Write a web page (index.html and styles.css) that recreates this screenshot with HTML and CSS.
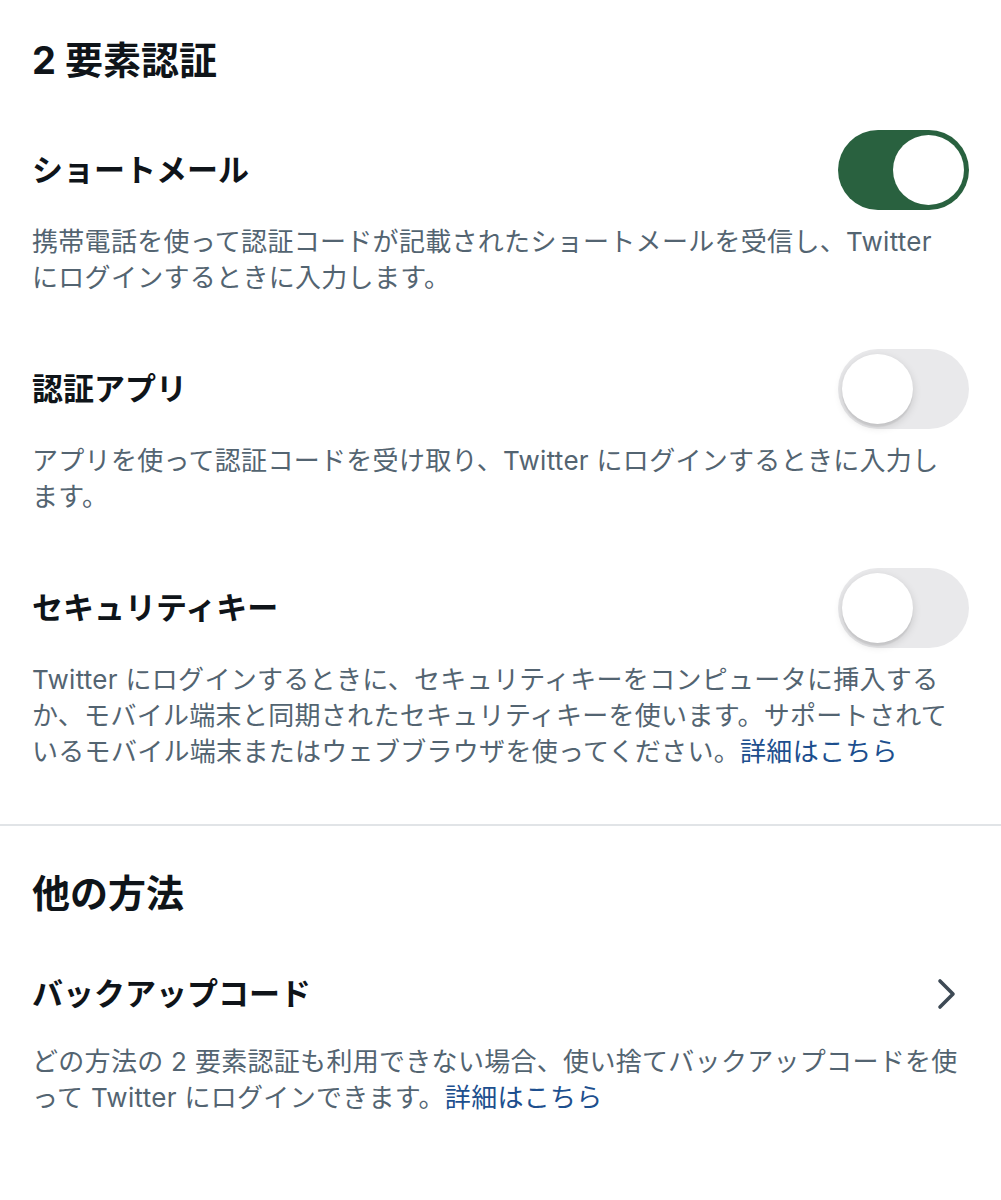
FILE: index.html
```html
<!DOCTYPE html>
<html lang="ja">
<head>
<meta charset="utf-8">
<title>2要素認証</title>
<link rel="stylesheet" href="styles.css">
</head>
<body>
<main class="page">
  <section class="group">
    <h1 class="group-title">2 要素認証</h1>

    <div class="item">
      <div class="item-row">
        <span class="item-label">ショートメール</span>
        <span class="switch switch-on" role="switch" aria-checked="true"><span class="knob"></span></span>
      </div>
      <p class="item-desc">携帯電話を使って認証コードが記載されたショートメールを受信し、Twitter にログインするときに入力します。</p>
    </div>

    <div class="item">
      <div class="item-row">
        <span class="item-label">認証アプリ</span>
        <span class="switch" role="switch" aria-checked="false"><span class="knob"></span></span>
      </div>
      <p class="item-desc">アプリを使って認証コードを受け取り、Twitter にログインするときに入力します。</p>
    </div>

    <div class="item">
      <div class="item-row">
        <span class="item-label">セキュリティキー</span>
        <span class="switch" role="switch" aria-checked="false"><span class="knob"></span></span>
      </div>
      <p class="item-desc">Twitter にログインするときに、セキュリティキーをコンピュータに挿入するか、モバイル端末と同期されたセキュリティキーを使います。サポートされているモバイル端末またはウェブブラウザを使ってください。<a class="link" href="#">詳細はこちら</a></p>
    </div>
  </section>

  <hr class="divider">

  <section class="group">
    <h2 class="group-title group-title-alt">他の方法</h2>

    <div class="item item-nav">
      <div class="item-row">
        <span class="item-label">バックアップコード</span>
        <svg class="chevron" viewBox="0 0 24 32" width="24" height="32" aria-hidden="true">
          <path d="M5 3 L18 16 L5 29" fill="none" stroke="currentColor" stroke-width="3.6" stroke-linecap="round" stroke-linejoin="round"/>
        </svg>
      </div>
      <p class="item-desc">どの方法の 2 要素認証も利用できない場合、使い捨てバックアップコードを使って Twitter にログインできます。<a class="link" href="#">詳細はこちら</a></p>
    </div>
  </section>
</main>
</body>
</html>
```

FILE: styles.css
```css
* {
  box-sizing: border-box;
}

html, body {
  margin: 0;
  padding: 0;
  background: #ffffff;
}

body {
  font-family: "Inter", "Noto Sans CJK JP", sans-serif;
  color: #0f1419;
  -webkit-font-smoothing: antialiased;
}

.page {
  width: 1001px;
}

.group {
  padding: 35px 32px 0;
  display: flex;
  flex-direction: column;
}

.group-title {
  margin: 0;
  font-size: 38px;
  line-height: 50px;
  font-weight: 700;
}

.group-title-alt {
  font-size: 38px;
  margin-top: 7px;
}

.item {
  margin-top: 53px;
}

.group-title + .item {
  margin-top: 45px;
}

.group-title-alt + .item {
  margin-top: 36px;
}

.item-row {
  height: 80px;
  display: flex;
  align-items: center;
  justify-content: space-between;
}

.item-label {
  font-size: 31px;
  font-weight: 700;
  line-height: 40px;
}

.item-desc {
  width: 930px;
  margin: 14px 0 0;
  font-size: 26px;
  line-height: 36px;
  letter-spacing: 0.3px;
  color: #536471;
  font-weight: 400;
}

.item-nav .item-desc {
  margin-top: 10px;
}

.link {
  color: #1d4f8e;
  text-decoration: none;
}

/* toggle switch */
.switch {
  position: relative;
  flex: none;
  width: 131px;
  height: 80px;
  border-radius: 40px;
  background: #e9e9eb;
}

.knob {
  position: absolute;
  top: 5px;
  left: 4px;
  width: 71px;
  height: 70px;
  border-radius: 50%;
  background: #ffffff;
  box-shadow: 0 3px 8px rgba(0, 0, 0, 0.15), 0 3px 1px rgba(0, 0, 0, 0.06);
}

.switch-on {
  background: #29613f;
}

.switch-on .knob {
  left: auto;
  right: 5px;
  box-shadow: none;
}

.chevron {
  flex: none;
  color: #3e4a55;
  margin-right: 10px;
}

.divider {
  margin: 54px 0 0;
  border: 0;
  height: 2px;
  background: #e1e4e7;
}
```
